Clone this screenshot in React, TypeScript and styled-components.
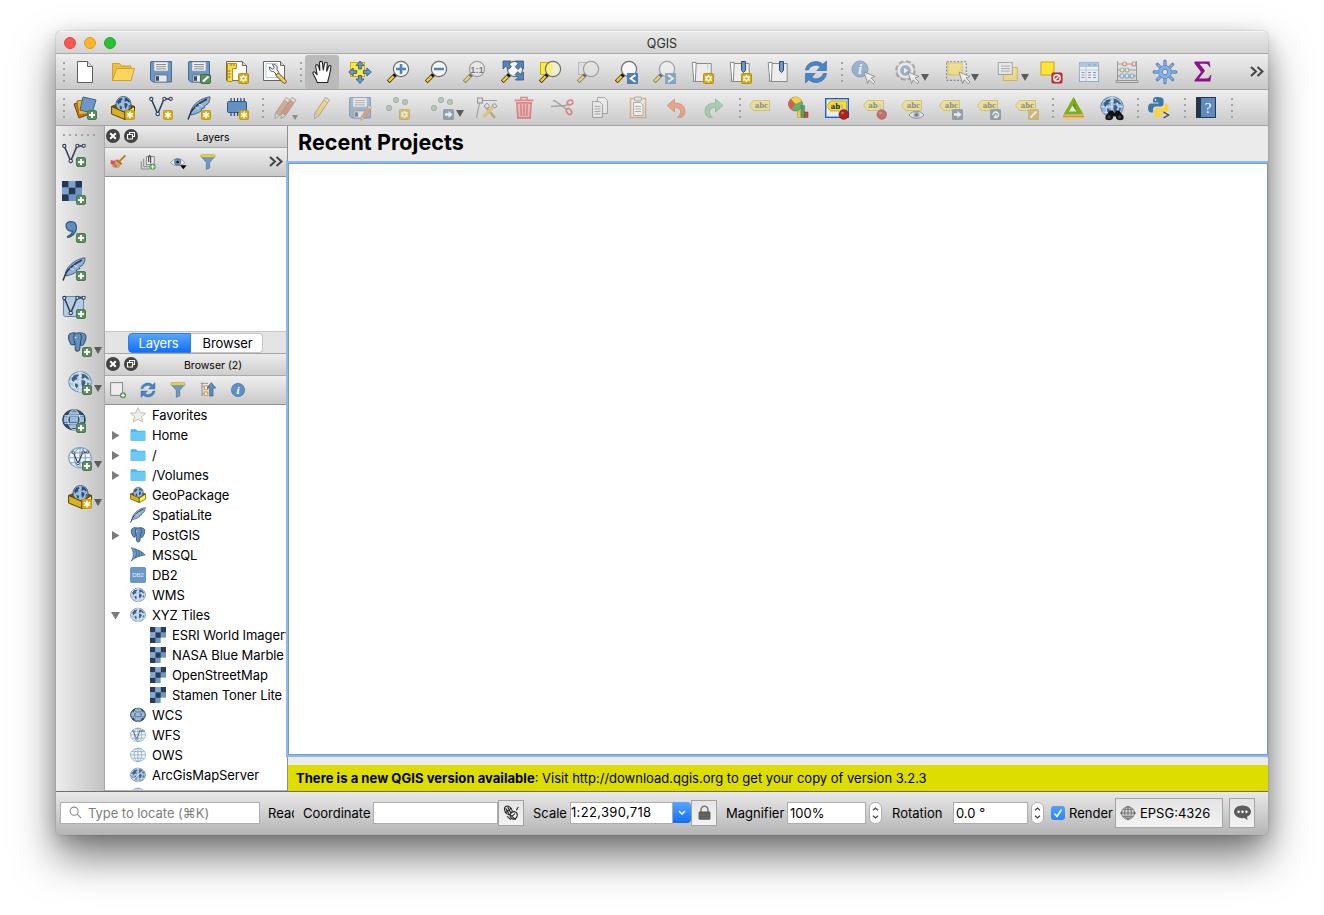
import React from "react";
import styled, { createGlobalStyle, css } from "styled-components";

const GlobalStyle = createGlobalStyle`
  * { box-sizing: border-box; }
  body { margin: 0; background: #fff; overflow: hidden; }
  #root { font-family: Inter, "Liberation Sans", "DejaVu Sans", sans-serif; font-size: 13px; color: #000; }
`;

/* ---------- icon fragments ---------- */

const BLUE = "#6d97c4";
const NAVY = "#2b3e55";

const PlusBadge = () => (
  <g>
    <rect x="14.5" y="14.5" width="9" height="9" rx="1.5" fill="#5b8f5e" stroke="#4d7a50" />
    <path d="M19 16v6M16 19h6" stroke="#fff" strokeWidth="2" />
  </g>
);
const StarBadge = () => (
  <g>
    <rect x="14.5" y="14.5" width="9" height="9" rx="1" fill="#d3ac15" stroke="#c39d10" />
    <path d="M19 15.6v6.8M16 17.3l6 3.4M22 17.3l-6 3.4" stroke="#fff" strokeWidth="1.4" />
  </g>
);
const SunBadge = () => (
  <g>
    <rect x="13.5" y="13.5" width="10" height="10" rx="1" fill="#d3ac15" stroke="#b8930c" />
    <path d="M18.5 14.4l1.3 2.1 2.4-.3-1 2.3 1 2.3-2.4-.3-1.3 2.1-1.3-2.1-2.4.3 1-2.3-1-2.3 2.4.3z" fill="#fff" />
    <circle cx="18.5" cy="18.5" r="1.3" fill="#d3ac15" />
  </g>
);
const ArrowBadge = ({ x = 13 }: { x?: number }) => (
  <g transform={`translate(${x} 13)`}>
    <rect width="11" height="11" rx="1.5" fill="#5f7387" />
    <path d="M2 4.2h3.5V2L9.5 5.5 5.5 9V6.8H2z" fill="#fff" />
  </g>
);
const Lens = ({ fill = "#f4f6f7" }: { fill?: string }) => (
  <g>
    <path d="M9.5 14.5L2.2 21.8" stroke="#4c4016" strokeWidth="4" />
    <path d="M8 16L2.8 21.2" stroke="#f3cf3e" strokeWidth="2.4" />
    <circle cx="8.9" cy="15.2" r="1.6" fill="#111" />
    <circle cx="15" cy="9" r="7.6" fill={fill} stroke="#6b6b6b" strokeWidth="1.2" />
  </g>
);
const Pointer = () => (
  <path d="M13 12l11 4.500-4 1.500 4 4-1.800 1.800-4-4-1.500 3.700z" fill="#fff" stroke="#555" strokeWidth=".9" />
);
const Floppy = () => (
  <g>
    <path d="M2 1.500h20.500v20.500H4L1.500 20V2z" fill={BLUE} stroke="#4a6c93" />
    <rect x="5" y="2" width="14" height="9" fill="#f1f1f1" stroke="#8b9aaa" strokeWidth=".6" />
    <path d="M7 4.500h10M7 6.700h10M7 8.900h10" stroke="#888" />
    <rect x="6" y="15" width="12" height="7" fill="#e8e8e8" stroke="#556" strokeWidth=".6" />
    <rect x="7" y="16.200" width="3" height="4.600" fill="#35506f" />
  </g>
);
const Land = ({ fill = "#3f5f85" }: { fill?: string }) => (
  <path
    d="M3.500 8l3-3.500 3.500-1 .8 2-2.300 1.500 1 2-2.800 1-1 2.500-1.500-2zM13.500 3l3 .5 3 2.500 2 3.500-2.500-.5-2-2-2.200 1.500-1.600-1 .9-2zM13.500 10l3.500.8.8 1.700-1.800 4-1.500 1.800-1-4zM7 13.500l2.500 1.200.8 2.500-1.600 2-1.700-2.500zM19.500 12.500l1.500 1-.8 2.500-1.200 1z"
    fill={fill}
  />
);
const Globe = ({ fill = "#b4cbe6" }: { fill?: string }) => (
  <g transform="translate(0 1) scale(1 .9)">
    <circle cx="12" cy="12" r="11.300" fill={fill} stroke="#6485ac" strokeWidth="1" />
    <path d="M1 12h22M12 1v22M3 6h18M3 18h18" stroke="#e9f0f8" strokeWidth=".9" fill="none" />
    <ellipse cx="12" cy="12" rx="6" ry="11" stroke="#e9f0f8" strokeWidth=".8" fill="none" />
    <Land />
  </g>
);
const WireGlobe = ({ fill = "#f2f7fc", stroke = "#86a5ca" }: { fill?: string; stroke?: string }) => (
  <g fill="none" stroke={stroke} strokeWidth="1.200" transform="translate(0 1) scale(1 .9)">
    <circle cx="12" cy="12" r="11.300" fill={fill} />
    <ellipse cx="12" cy="12" rx="5.500" ry="11" />
    <path d="M12 1v22M1 12h22M3 6.500h18M3 17.500h18" />
  </g>
);
const DarkGlobe = () => (
  <g transform="translate(0 1) scale(1 .9)">
    <circle cx="12" cy="12" r="11.300" fill="#2f4c70" stroke="#253c58" />
    <path d="M8 2.800h8v3.600H8zM2 9h4v5.400H1.700zM8 9h8v5.400H8zM18 9h4v5.400h-4zM8 17h8v4H8z" fill="#9bbbe0" />
    <ellipse cx="12" cy="12" rx="6" ry="11" fill="none" stroke="#dbe6f2" strokeWidth=".9" />
    <path d="M2.500 7.600h19M2.500 15.800h19" stroke="#dbe6f2" strokeWidth="1.200" />
  </g>
);
const VectorV = () => (
  <g fill="none" stroke={NAVY} strokeWidth="1.500">
    <path d="M2.500 3.500l6.200 14.500L15 3h7" />
    <g fill="#f4f4f4" strokeWidth="1.100">
      <circle cx="2.300" cy="3" r="1.600" />
      <circle cx="8.700" cy="18" r="1.700" />
      <circle cx="15.400" cy="2.800" r="1.600" />
      <circle cx="21.700" cy="2.800" r="1.600" />
    </g>
  </g>
);
const Feather = () => (
  <g>
    <path d="M23 .8C14 2 6 8 3.500 15.500L4 19c4-1 8-2 11-5l-1-.8 4-1.600-.8-1.300 3.800-2.600C22.500 5.500 23 3 23 .8z" fill="#8fb2d8" stroke="#3b5878" strokeWidth=".9" />
    <path d="M20 3C12 7 6 12 3.500 17L1 23.500" fill="none" stroke="#26394f" strokeWidth="1.500" />
    <path d="M8 11l4 2M11.500 8l4 2" stroke="#e3edf7" strokeWidth=".8" />
  </g>
);
const Checker = () => (
  <g>
    <rect x="0" y="0" width="20" height="20" fill="#6d94c2" />
    <path d="M0 0h6.600v6.600H0zM13.300 0H20v6.600h-6.700zM6.600 6.600h6.700v6.700H6.600zM0 13.300h6.600V20H0z" fill="#243951" />
    <path d="M6.600 0h6.700v6.600H6.600zM0 6.600h6.600v6.700H0z" fill="#7ea2ce" />
  </g>
);
const Elephant = () => (
  <g>
    <path d="M2 4c1-3 6-3.500 9-2.500C15 .5 21 1 22 4c.8 3-1 8-3 11-1 1.200-2.500.6-3.500 0L15 20c-.3 3.200-5 3.500-5.300 0L9.500 14c-2 1-3.500 2-4.700.5C3 12 1.500 7 2 4z" fill="#6490bd" stroke="#35526f" strokeWidth="1.300" />
    <path d="M9.200 2.200C7.500 4 7.500 9 9.500 13.500M15.500 2.200c2.200 2.500 1.800 6 .3 9.300l.2 3" fill="none" stroke="#2c4764" strokeWidth="1.200" />
    <circle cx="10" cy="6.500" r=".8" fill="#fff" />
  </g>
);
const GeoPackage = () => (
  <g>
    <path d="M.6 10.500L12 5.500l11.500 5-9.500 6z" fill="#6b560f" stroke="#54430a" strokeLinejoin="round" />
    <circle cx="12.500" cy="8" r="7.500" fill="#9dbbdd" stroke="#47688e" />
    <g transform="translate(3.500 -.5) scale(.74)"><Land fill="#2f4a6c" /></g>
    <path d="M.6 10.500L14 16.500v7L.6 18z" fill="#d9b21c" stroke="#54430a" strokeLinejoin="round" />
    <path d="M14 16.500l9.500-6V18L14 23.500z" fill="#fdf03e" stroke="#54430a" strokeLinejoin="round" />
  </g>
);
const TagShape = ({ text, x = 12.500, fill = "#f3e063", ink = "#4c4a3c" }: { text: string; x?: number; fill?: string; ink?: string }) => (
  <g>
    <path d="M.5 9.500L4.500 4.500h16v10h-16z" fill={fill} stroke="#c3ab2e" />
    <text x={x} y="12.300" textAnchor="middle" fontFamily="DejaVu Serif Condensed, DejaVu Serif" fontWeight="700" fontSize="7.800" fill={ink}>{text}</text>
  </g>
);
const Tag = () => <TagShape text="abc" />;
const Pin = () => (
  <g>
    <path d="M16.500 8l2 9" stroke="#bbb" strokeWidth="2" />
    <circle cx="18.800" cy="18.500" r="4.800" fill="#b3201f" stroke="#7c1010" strokeWidth=".7" />
    <circle cx="17.500" cy="17" r="1.300" fill="#dd6a66" />
  </g>
);
const Refresh = () => (
  <g fill="#4b84c6" stroke="#2f66a5" strokeWidth=".6">
    <path d="M1.500 10C2 5 6.500 1.500 12 1.500c3 0 5 1 6.800 2.700L22.500 1v9.500h-9.700l3.400-3.400C14.500 5.200 12.500 5 11 5.300 7 5.800 5 8 4.500 10z" />
    <path d="M22.500 13.500c-.5 5-5 9-10.500 9-3 0-5.200-1-7-2.700L1.500 23v-9.500h9.700l-3.400 3.400c1.700 1.700 3.500 2.200 5.200 1.800 3.800-.7 5.500-2.700 6.300-5.200z" />
  </g>
);
const Map24 = () => (
  <g fill="#ededed" stroke="#8a8a8a" transform="translate(.7 0)">
    <path d="M4.500 3.500h16v18h-18z" />
    <path d="M1.500 2.500h4l-.8 19H3.200z" fill="#fff" />
    <path d="M17 3.500v6" stroke="#ccc" />
  </g>
);
const Bookmark = ({ x = 13.500 }: { x?: number }) => (
  <path d={`M${x} 1.500h4v9l-2 2-2-2z`} fill="#6d97c4" stroke="#2e4d72" />
);
const Points = () => (
  <g fill="#8fb39a" stroke="#698872" strokeWidth=".8">
    <circle cx="3" cy="12" r="2.700" />
    <circle cx="10" cy="4" r="2.700" />
    <circle cx="19" cy="6" r="2.700" />
  </g>
);
const PencilShape = ({ color, x = 0 }: { color: string; x?: number }) => (
  <g transform={`translate(${x} 0)`}>
    <path d="M14 1.500l4 2.500-10.500 15.500L3 22.500l.5-5.500z" fill={color} stroke="#7d6c58" strokeWidth=".9" />
    <path d="M14 1.500l4 2.500-1.800 2.600-4-2.500zM3 22.500l.5-5.500 4 2.500z" fill="#dcd5c8" stroke="#85796a" strokeWidth=".7" />
  </g>
);
const FunnelShape = () => (
  <g>
    <path d="M2 4l7.500 8.500V23l5-2v-8.500L22 4z" fill="#6f9ac6" stroke="#496c92" />
    <rect x="1.500" y="1" width="21" height="4" rx="1" fill="#e6d862" stroke="#a49a3c" />
  </g>
);

const icons: Record<string, React.ReactNode> = {
  newFile: (
    <g>
      <path d="M4.500 1.500h10l5 5v16h-15z" fill="#fff" stroke="#5e5e5e" />
      <path d="M14.500 1.500v5h5" fill="#ddd" stroke="#5e5e5e" />
    </g>
  ),
  open: (
    <g stroke="#cfa12d" strokeLinejoin="round">
      <path d="M1.500 21V3.500h7l2 2.500h9.500v3" fill="#eebf3c" />
      <path d="M1.500 20.500l4-12h18l-3.500 12z" fill="#fbd55c" />
    </g>
  ),
  save: <Floppy />,
  saveAs: (
    <g>
      <Floppy />
      <rect x="13.500" y="14.500" width="10" height="9" rx="1.500" fill="#5b8f5e" stroke="#426d46" />
      <path d="M16 21.500l5.500-5" stroke="#fff" strokeWidth="2.200" />
    </g>
  ),
  newLayout: (
    <g transform="translate(-1 0)">
      <path d="M2.500 1.500h16l4 4v15h-20z" fill="#fff" stroke="#666" />
      <path d="M18.500 1.500v4h4" fill="#ddd" stroke="#666" />
      <path d="M3.500 3.500h9v5h-4v13h-5z" fill="#f7d847" stroke="#b8930c" />
      <path d="M4 11h2.500M4 14h2.500M4 17h2.500M7 4v2M10 4v2" stroke="#94770c" />
      <g transform="translate(1 0)"><SunBadge /></g>
    </g>
  ),
  layoutManager: (
    <g transform="translate(-1 0)">
      <path d="M1.500 1.500h17l4 4v15h-21z" fill="#fff" stroke="#666" />
      <path d="M18.500 1.500v4h4" fill="#ddd" stroke="#666" />
      <path d="M4 3.500h11v14H4z" fill="none" stroke="#b8c9e2" />
      <path d="M15.500 14.500l7 7" stroke="#6b5512" strokeWidth="4.500" strokeLinecap="round" />
      <path d="M16 15l6.500 6.500" stroke="#f0d06b" strokeWidth="2.800" strokeLinecap="round" />
      <path d="M10.500 4.500c3-.5 5.500 2 4.500 5l2 3-2.500 2-3-3c-3 .5-4.500-2-4-4.500l3 2 1.800-1.500z" fill="#eee" stroke="#555" />
    </g>
  ),
  hand: (
    <path
      transform="translate(.7 0)"
      d="M6.500 22.500c-.3-2-2.300-5-4-8.500-1-2 .8-3 2-1.600l2 2.600L5 6.500c-.3-2 2-2.600 2.600-.7l1.600 5L8.800 3c0-2.200 2.800-2.200 3 0l.7 7.300L13.800 3.500c.5-2 3-1.500 2.800.4l-.7 7.600 2-5c.7-1.700 2.700-1 2.300.8-.7 4-1 6.500-2 10-.4 1.500-1 2.500-1.200 5.200z"
      fill="#fff"
      stroke="#222"
      strokeWidth="1.100"
    />
  ),
  panSelection: (
    <g>
      <rect x="2.500" y="2.500" width="14" height="14" fill="#fdea3b" stroke="#cdab16" />
      <path d="M12 1l4 4.500h-2.500V9h-3V5.500H8zM12 23.500l4-4.500h-2.500v-3.500h-3V19H8zM.7 12l4.500-4v2.500h3.500v3H5.200V16zM23.300 12l-4.500-4v2.500h-3.500v3h3.500V16z" fill="#6796c8" stroke="#31547d" strokeWidth=".8" />
    </g>
  ),
  zoomIn: <g><Lens /><path d="M15 4v10M10 9h10" stroke="#4d83bb" strokeWidth="2.600" /></g>,
  zoomOut: <g><Lens /><path d="M10 9h10" stroke="#4d83bb" strokeWidth="2.600" /></g>,
  zoomNative: (
    <g><Lens fill="#eee" /><text x="15" y="12.500" textAnchor="middle" fontFamily="Liberation Sans" fontWeight="700" fontSize="9.500" fill="#333">1:1</text></g>
  ),
  zoomFull: (
    <g>
      <Lens />
      <path d="M3 1h8L8.500 3.500l3 3-2.800 2.800-3-3L3 9zM23.500 1v8L21 6.500l-3 3-2.800-2.800 3-3L15.500 1zM23.500 20h-8l2.500-2.500-3-3 2.800-2.800 3 3 2.700-2.700z" fill="#5585b8" stroke="#2f5480" strokeWidth=".8" />
    </g>
  ),
  zoomSelection: (
    <g>
      <rect x="2.500" y="2.500" width="12" height="12" fill="#fdea3b" stroke="#cdab16" />
      <Lens fill="#f1efd2" />
      <path d="M9.500 5q2-3 5-3v14q-3 0-5-3z" fill="#f8ec84" />
    </g>
  ),
  zoomLayer: (
    <g><rect x="2.500" y="2.500" width="12" height="12" fill="#ddd" stroke="#999" /><Lens fill="#e4e4e4" /></g>
  ),
  zoomLast: (
    <g><Lens /><rect x="13" y="13" width="11" height="11" fill="#4d7fb3" /><path d="M21.500 15l-5 3.500 5 3.500" fill="none" stroke="#fff" strokeWidth="1.800" /></g>
  ),
  zoomNext: (
    <g><Lens /><rect x="13" y="13" width="11" height="11" fill="#4d7fb3" /><path d="M16 15l5 3.500-5 3.500" fill="none" stroke="#fff" strokeWidth="1.800" /></g>
  ),
  newMap: <g><Map24 /><SunBadge /></g>,
  newBookmark: <g><Map24 /><Bookmark /><SunBadge /></g>,
  bookmarks: <g><Map24 /><Bookmark /></g>,
  refresh: <Refresh />,
  identify: (
    <g><circle cx="9" cy="9" r="8" fill="#5f8fc4" stroke="#49729f" /><text x="9" y="14" textAnchor="middle" fontFamily="Liberation Serif" fontStyle="italic" fontWeight="700" fontSize="15" fill="#fff">i</text><Pointer /></g>
  ),
  action: (
    <g transform="translate(-1 0)">
      <circle cx="10.500" cy="10.500" r="9" fill="none" stroke="#777" strokeWidth="2.600" strokeDasharray="4.700 2.370" />
      <circle cx="10.500" cy="10.500" r="8.400" fill="#f0f0f0" stroke="#888" strokeWidth=".8" />
      <circle cx="10.500" cy="10.500" r="5" fill="#5f8fc4" stroke="#777" strokeWidth=".6" />
      <path d="M9 7.800l4.200 2.700L9 13.200z" fill="#fff" />
      <Pointer />
    </g>
  ),
  select: (
    <g>
      <rect x=".7" y="1.700" width="19.600" height="18.600" fill="none" stroke="#333" strokeDasharray="2 1.500" />
      <rect x="2" y="3" width="14" height="12" fill="#f6dd4b" stroke="#cdab16" />
      <Pointer />
    </g>
  ),
  selectValue: (
    <g>
      <path d="M6.500 7.500h14v13h-14z" fill="#f6dd4b" stroke="#b99b16" transform="translate(.8 0)" />
      <rect x="2.300" y="2.500" width="14" height="12" fill="#eee" stroke="#777" />
      <path d="M5 6h9M5 8.500h9M5 11h9" stroke="#888" />
    </g>
  ),
  deselect: (
    <g transform="translate(1 .5)">
      <rect x="1" y="1.500" width="13" height="13" fill="#fde53a" stroke="#cda316" />
      <rect x="12" y="12.500" width="10" height="10" rx="1" fill="#d3353a" stroke="#a81d22" />
      <circle cx="17" cy="17.500" r="3.200" fill="none" stroke="#fff" strokeWidth="1.400" />
      <path d="M14.800 19.700l4.400-4.400" stroke="#fff" strokeWidth="1.300" />
    </g>
  ),
  table: (
    <g>
      <rect x="2.500" y="2.500" width="19" height="19" fill="#fff" stroke="#6691c2" />
      <path d="M3 3h18v4H3z" fill="#8cb0da" />
      <path d="M9 3v18M3 10h18" stroke="#9cbbe0" />
      <path d="M4.500 12.500h3M11 12.500h3M16 12.500h3M4.500 15h3M11 15h3M16 15h3M4.500 17.500h3M11 17.500h3M16 17.500h3M11 5h3M16 5h3" stroke="#456c98" />
    </g>
  ),
  abacus: (
    <g fill="none" stroke="#666">
      <path d="M2.500 1v20M21.500 1v20" />
      <path d="M2 4h20M2 10h20M2 16h20" />
      <path d="M1 20.500h22v2H1z" fill="#ddd" />
      <g fill="#eee" strokeWidth="1.200"><g stroke="#c84040"><circle cx="9.500" cy="4" r="2" /><circle cx="19" cy="4" r="2" /></g><g stroke="#5a9a5c"><circle cx="7" cy="10" r="2" /><circle cx="12" cy="10" r="2" /></g><g stroke="#4b7fbc"><circle cx="7" cy="16" r="2" /><circle cx="12" cy="16" r="2" /><circle cx="17" cy="16" r="2" /></g></g>
    </g>
  ),
  toolbox: (
    <g>
      <path
        d="M12 1.200v21.600M1.200 12h21.600M4.400 4.400l15.200 15.200M19.600 4.400L4.400 19.600"
        stroke="#5f8dc2"
        strokeWidth="3.400"
        strokeLinecap="round"
      />
      <path d="M12 2v20M2 12h20M5 5l14 14M19 5L5 19" stroke="#86aee0" strokeWidth="1.600" strokeLinecap="round" />
      <circle cx="12" cy="12" r="6.500" fill="#86aee0" stroke="#5f8dc2" strokeWidth=".8" />
      <circle cx="12" cy="12" r="2.700" fill="#dfdfdf" stroke="#5f8dc2" />
    </g>
  ),
  sigma: <path d="M3.500 1.500h15l.8 5.500h-1c-.8-2.500-1.800-3.300-4.300-3.300H8.500l5.500 7-6 7.800h7c2.500 0 3.500-1 4.300-3.500h1l-1 6.500H3.500v-1.300L10 12 3.500 3.500z" fill="#8c128c" />,
  dataSource: (
    <g>
      <path d="M1 8l11-4 5 14-11 4z" fill="#c7702e" stroke="#7a4319" />
      <path d="M4 5l12-2 2 14-12 2z" fill="#efb722" stroke="#96710f" />
      <path d="M10 1l13 3-4 13-12-3z" fill="#6d97c8" stroke="#3e6087" />
      <PlusBadge />
    </g>
  ),
  newGpkg: <g><GeoPackage /><StarBadge /></g>,
  newShape: <g><VectorV /><StarBadge /></g>,
  newSpatialite: <g><Feather /><StarBadge /></g>,
  newMemory: (
    <g>
      <path d="M6 2v18M9.300 2v18M12.600 2v18M15.900 2v18M19.200 2v18" stroke="#2a4364" strokeWidth="1.200" />
      <rect x="2.500" y="5.500" width="19" height="11" rx="1" fill="#6290c4" stroke="#34567f" />
      <StarBadge />
    </g>
  ),
  edits: (
    <g><g transform="translate(-2 0)"><PencilShape color="#c98759" /></g><PencilShape color="#d1603f" x={4} /></g>
  ),
  pencil: <PencilShape color="#ecd43e" x={1.5} />,
  saveEdits: <g><Floppy /><g transform="translate(11 8.500) scale(.7)"><PencilShape color="#e8722f" /></g></g>,
  addPoint: <g><Points /><SunBadge /></g>,
  moveFeature: <g><Points /><ArrowBadge x={12} /></g>,
  vertexTool: (
    <g>
      <path d="M6 4.500h17M6 4.500L2.500 22" stroke="#666" fill="none" />
      <rect x="3.500" y="2" width="5" height="5" fill="#ddd" stroke="#555" />
      <path d="M11 10l10 12" stroke="#a5842d" strokeWidth="2.500" />
      <path d="M20 10L9.500 21" stroke="#e0b638" strokeWidth="3" />
      <path d="M10 10l3-3 3 3.500-3 2zM18 9l3-1.500 2 3-2.500 1.500z" stroke="#666" fill="#ddd" />
    </g>
  ),
  trash: (
    <g fill="none" stroke="#dc3d42" transform="translate(1.200 0) scale(.9 .97)">
      <path d="M1.500 4.500h21M8.500 4V1.500h7V4" strokeWidth="1.600" />
      <path d="M4 7h16l-1.200 15.500H5.200z" fill="#e8a1a1" strokeWidth="1.800" />
      <path d="M8.500 8.500l.5 12M12 8.500v12M15.500 8.500l-.5 12" strokeWidth="1.800" />
    </g>
  ),
  cut: (
    <g fill="none">
      <path d="M3 4.500l2 .5 12 8.500M1 10.500l15-1 3-2" stroke="#777" strokeWidth="1.500" />
      <ellipse cx="20" cy="6.500" rx="3" ry="2.300" stroke="#d04444" strokeWidth="1.600" transform="rotate(-25 20 6.500)" />
      <ellipse cx="19" cy="15.500" rx="2.300" ry="3.300" stroke="#d04444" strokeWidth="1.600" transform="rotate(-35 19 15.500)" />
    </g>
  ),
  copy: (
    <g fill="#f0f0f0" stroke="#777"><path d="M9.500 1.500h7l3 3v13h-10z" /><path d="M4.500 5.500h7l3 3v13h-10z" /><path d="M6.500 10.500h6M6.500 13h6M6.500 15.500h6M6.500 18h6" strokeWidth=".9" /></g>
  ),
  paste: (
    <g><rect x="4.500" y="2.500" width="15" height="19" fill="#eee" stroke="#cc8b45" strokeWidth="1.500" /><path d="M7.500 6.500h7l2.500 2.500v10.500H7.500z" fill="#fff" stroke="#888" /><rect x="8.500" y="1" width="7" height="4" rx="1" fill="#ddd" stroke="#777" /><path d="M9 10.500h6M9 13h6M9 15.500h6" stroke="#888" /></g>
  ),
  undo: <path d="M3 9.500l7.500-6.500v4c7 0 10.500 3 10.500 8.500 0 3-1.500 4.800-3.500 5.800h-4c3.500-2 4.500-7.500.5-9.300-1-.4-3.500-.5-3.500-.5v4.500z" fill="#ea7a4c" stroke="#c75a2d" strokeWidth=".8" />,
  redo: <path d="M21 9.500L13.500 3v4C6.500 7 3 10 3 15.500c0 3 1.500 4.800 3.500 5.800h4c-3.500-2-4.500-7.500-.5-9.300 1-.4 3.500-.5 3.500-.5v4.500z" fill="#7cc08e" stroke="#53986a" strokeWidth=".8" />,
  tag: <Tag />,
  diagram: (
    <g>
      <circle cx="8.500" cy="8" r="7" fill="#69b06d" stroke="#5d6b50" strokeWidth=".6" />
      <path d="M8.500 8L4 2.500A7 7 0 0 1 14.800 5z" fill="#f5cf3f" /><path d="M8.500 8L3 3.600A7 7 0 0 0 4 13.400z" fill="#dc5b56" />
      <rect x="10.500" y="15" width="3.500" height="6.500" fill="#f3cc46" stroke="#b4952c" strokeWidth=".5" /><rect x="14" y="9.500" width="3.500" height="12" fill="#59a05d" stroke="#447348" strokeWidth=".5" /><rect x="17.500" y="16" width="3.500" height="5.500" fill="#b5553f" stroke="#7c372a" strokeWidth=".5" />
    </g>
  ),
  highlightLabels: (
    <g>
      <rect x=".7" y="2.700" width="22.600" height="18.600" fill="#e8eef6" stroke="#1d62c4" strokeWidth="1.400" />
      <g transform="translate(1 .5)"><TagShape text="ab" x={9.5} fill="#f8de2a" ink="#222" /></g><Pin />
    </g>
  ),
  pinLabel: <g><TagShape text="ab" x={10} /><Pin /></g>,
  showLabel: (
    <g><Tag /><path d="M8 19c4-5 11-5 15 0-4 4.500-11 4.500-15 0z" fill="#eee" stroke="#555" /><circle cx="15.500" cy="18.800" r="3" fill="#5f8fc4" /><circle cx="15.500" cy="18.800" r="1.300" fill="#222" /></g>
  ),
  moveLabel: <g><Tag /><ArrowBadge /></g>,
  rotateLabel: <g><Tag /><rect x="13" y="13" width="11" height="11" rx="1.500" fill="#5f7387" /><path d="M16 19a2.800 2.800 0 1 1 2.800 2.600M18.800 18v3.600l-2-1" fill="none" stroke="#fff" strokeWidth="1.300" /></g>,
  editLabel: <g><Tag /><rect x="13" y="13" width="11" height="11" rx="1.500" fill="#c6a125" /><path d="M15.500 21.500l6-6" stroke="#fff" strokeWidth="2" /></g>,
  grass: (
    <g><path d="M11.500 1L1.500 18.500h20z" fill="#7fae1d" /><path d="M10.500 9.500l-3.500 6h7.500z" fill="#e6e9dc" /><path d="M11.500 1l2.500 4.500-3.500 4 4.500 6" fill="#6a9814" /><path d="M1 20.300h21" stroke="#e8862c" strokeWidth="1.800" /><path d="M1 22.200h21" stroke="#f4c83c" strokeWidth="1.300" /></g>
  ),
  metaSearch: (
    <g><g transform="translate(0 -1)"><Globe fill="#94b4dc" /></g><path d="M7.500 13.500h3l1 2h1l1-2h3l4.500 5.500v3c-1 1.500-6 1.500-7 0l-1-3h-2l-1 3c-1 1.500-6 1.500-7 0v-3z" fill="#111" transform="translate(2.500 1)" /><circle cx="9" cy="21" r="1.800" fill="#444" /><circle cx="19.500" cy="21" r="1.800" fill="#444" /></g>
  ),
  python: (
    <g>
      <path d="M10.500 1C6.500 1 6 2.500 6 4v2.500h5.500v1H4C2 7.500 1 9.500 1 12s1 4.500 3 4.500h2V13.500c0-2 1.300-3 3-3h5c1.500 0 2.500-1 2.500-2.500V4c0-2-2-3-6-3z" fill="#3b77a8" /><circle cx="8.500" cy="3.800" r=".9" fill="#fff" />
      <path d="M11.500 21.500c3 0 4-1.500 4-2.500V17h-4v-1H19c1.500 0 2.500-1.500 2.500-4s-1-4.500-2.500-4.500h-1.500V9c0 2-1 3-3 3h-5C8 12 7 13 7 14.500V18c0 2 1.500 3.500 4.500 3.500z" fill="#fbd146" />
      <path d="M16.500 16l5 3-5 3" fill="none" stroke="#444" strokeWidth="1.400" />
    </g>
  ),
  help: (
    <g><rect x="2.500" y="1.500" width="19" height="20" fill="#5d8bbf" stroke="#27384d" /><path d="M2 1h5v21H2z" fill="#26364a" /><text x="14" y="16.500" textAnchor="middle" fontFamily="Liberation Serif" fontSize="15" fill="#fff">?</text></g>
  ),
  addVector: <g><VectorV /><PlusBadge /></g>,
  addRaster: <g><Checker /><PlusBadge /></g>,
  addComma: <g><path d="M4 6.500C4 1.500 14 .8 14.500 8c.3 5-4 9.500-8.500 10.500l-.5-1c3-1.500 5-3.500 5-5.500C7 12.500 4 10.500 4 6.500z" fill="#5e8cbd" stroke="#31557d" strokeWidth="1.200" /><PlusBadge /></g>,
  addSpatialite: <g><Feather /><PlusBadge /></g>,
  addVirtual: <g><rect x="1.500" y="1.500" width="20" height="20" rx="2" fill="#b5cbe5" stroke="#6784a6" /><VectorV /><PlusBadge /></g>,
  addPostgis: <g><g transform="translate(-1 -1) scale(.85)"><Elephant /></g><PlusBadge /></g>,
  addWms: <g><g transform="translate(0 -1)"><Globe /></g><PlusBadge /></g>,
  addWcs: <g><g transform="translate(0 -1)"><DarkGlobe /></g><PlusBadge /></g>,
  addWfs: <g><g transform="translate(0 -1)"><WireGlobe /></g><g transform="translate(3.500 3) scale(.75)"><VectorV /></g><PlusBadge /></g>,
  globe: <Globe />,
  darkGlobe: <DarkGlobe />,
  wfs: <g><WireGlobe /><g transform="translate(3 3.500) scale(.8)" opacity=".8"><VectorV /></g></g>,
  wireGlobe: <WireGlobe />,
  arcgis: <g><Globe fill="#86a8d0" /><path d="M4 20L20 5" stroke="#dbe6f2" strokeWidth="1.500" /></g>,
  geoPackage: <GeoPackage />,
  feather: <Feather />,
  elephant: <Elephant />,
  mssql: <g><path d="M2 1c5 1.500 15 4 21 11-7 1-15 3-21 9C6 14 6 8 2 1z" fill="#6f98c6" stroke="#35587f" /><path d="M8 3.500c3 5 2 8 0 13M13 5.500c2 4 1 6 0 8.500M17.500 8c1 2 0 3 0 5" fill="none" stroke="#35587f" strokeWidth="1.200" /></g>,
  db2: <g><rect width="24" height="24" rx="2.500" fill="#6a97c7" /><text x="12" y="15" textAnchor="middle" fontFamily="Liberation Sans" fontSize="9" fill="#e8f0f9">DB2</text></g>,
  checker: (
    <g>
      <rect width="24" height="24" fill="#6d94c2" />
      <path d="M0 0h8v8H0zM16 0h8v8h-8zM8 8h8v8H8zM0 16h8v8H0z" fill="#2b3d52" />
      <path d="M8 0h8v8H8zM0 8h8v8H0z" fill="#86a9d3" />
      <path d="M16 16h8v8h-8z" fill="#fff" />
    </g>
  ),
  folder: <g><path d="M1 3.500h8l2 2h12v15H1z" fill="#4fb2ea" /><path d="M1 7h22v13.500H1z" fill="#6cc8f7" /></g>,
  star: <path d="M12 1l3.300 7.500 8.200.8-6.200 5.400 1.900 8L12 18.500 4.800 22.700l1.900-8L.5 9.300l8.200-.8z" fill="#eeeee6" stroke="#a3a396" />,
  brush: (
    <g transform="translate(0 1)"><path d="M23 1L14 10" stroke="#b5822a" strokeWidth="3" /><path d="M10 7l8 6.500-5 6C9 21 5 19.500 2 17l2-7z" fill="#e79a52" /><path d="M1 8l7 2-1 5-6-1z" fill="#e84d55" /><path d="M6 14.500l5 1-1 4-5-2z" fill="#5f93d6" /><path d="M10 8l7.500 6" stroke="#a35a16" strokeWidth="2" /></g>
  ),
  addGroup: (
    <g fill="none" stroke="#808080" strokeWidth="1.300"><path d="M2 11v11.500h13M5.500 7v12h12" /><rect x="9.500" y="4" width="12" height="12" fill="#e8e8e8" /><path d="M13 12V4.500q0-2.500 1.500-2.500T16 4.500V14" stroke="#333" strokeWidth="1.500" /><circle cx="19" cy="19" r="4.600" fill="#5b9a5e" stroke="none" /><path d="M19 16v6M16 19h6" stroke="#fff" strokeWidth="1.600" /></g>
  ),
  eye: (
    <g transform="translate(1 0)"><path d="M0 13c5-8 16-8 21 0-5 6-16 6-21 0z" fill="#f1f1f1" stroke="#888" strokeWidth="1.200" /><circle cx="10.500" cy="12" r="4.800" fill="#6d95c2" stroke="#3e5f86" /><circle cx="10.500" cy="12" r="2" fill="#111" /><path d="M14 17h10l-5 6z" fill="#000" /></g>
  ),
  funnel: <FunnelShape />,
  addLayer: <g><rect x="1" y="1" width="18" height="19" fill="#ededed" stroke="#777" strokeWidth="1.300" /><circle cx="19.500" cy="20" r="4.600" fill="#5b8f5e" /><path d="M19.500 17.200v5.600M16.700 20h5.600" stroke="#fff" strokeWidth="1.700" /></g>,
  collapse: (
    <g fill="none"><path d="M3 1v20M3 7h4M3 18h4" stroke="#888" strokeWidth="1.300" /><path d="M1 2h11" stroke="#888" strokeWidth="1.300" /><rect x="6.500" y="6" width="5" height="5" stroke="#e08c2a" strokeWidth="1.400" fill="#fff" /><rect x="6.500" y="15" width="5" height="5" stroke="#e08c2a" strokeWidth="1.400" fill="#fff" /><path d="M17 1l6.500 8h-4v12h-5V9h-4z" fill="#5f8fc4" stroke="#2f5480" /></g>
  ),
  info: <g><circle cx="12" cy="12" r="10" fill="#5f8fc4" stroke="#49729f" /><text x="12" y="18" textAnchor="middle" fontFamily="Liberation Serif" fontStyle="italic" fontWeight="700" fontSize="17" fill="#fff">i</text></g>,
  search: <g fill="none" stroke="#8a8a8a" strokeWidth="2"><circle cx="9.500" cy="9.500" r="7.500" /><path d="M15 15l7.500 7.500" /></g>,
  mouse: (
    <g stroke="#222" fill="#f4f4f4" strokeWidth="1.700"><ellipse cx="8" cy="8" rx="5" ry="7" transform="rotate(-35 8 8)" /><path d="M7 3l5 9M4 5l5 8M3 12l9-7" fill="none" /><path d="M11 13c5-6 12-2 10 4s-9 5-10 0zM20 8l3-5" /><path d="M6 17l6 5M10 14l9 8M13 17l5-4" fill="none" /></g>
  ),
  lock: <g><path d="M6.500 11V7.500a5.500 5.500 0 0 1 11 0V11" fill="none" stroke="#777" strokeWidth="2.400" /><rect x="2.500" y="10.500" width="19" height="13" rx="2" fill="#5b5b5b" /><path d="M3 14h18M3 17h18M3 20h18" stroke="#6e6e6e" /></g>,
  crs: <g fill="none" stroke="#707070" strokeWidth="1.300"><circle cx="12" cy="12" r="9.500" fill="#ccc" /><path d="M12 1v22M1 12h22M4 6.500h16M4 17.500h16" /><ellipse cx="12" cy="12" rx="5" ry="9.500" /><path d="M0 12l3-3v6zM24 12l-3-3v6z" fill="#666" stroke="none" /></g>,
  message: <g><path d="M12 2C5 2 0 6 0 11s5 9 12 9c1 0 2 0 3-.2L19 23l-.5-5C22 16.500 24 14 24 11c0-5-5-9-12-9z" fill="#5c5c5c" /><circle cx="6.500" cy="11" r="1.700" fill="#fff" /><circle cx="12" cy="11" r="1.700" fill="#fff" /><circle cx="17.500" cy="11" r="1.700" fill="#fff" /></g>,
};

const Svg = styled.svg<{ $dim?: boolean }>`
  display: block;
  flex: none;
  overflow: visible;
  opacity: ${(p) => (p.$dim ? 0.55 : 1)};
`;
const Icon = ({ name, size = 24, dim }: { name: string; size?: number; dim?: boolean }) => (
  <Svg width={size} height={size} viewBox="0 0 24 24" $dim={dim} aria-hidden>
    {icons[name]}
  </Svg>
);

/* ---------- window ---------- */

const Desktop = styled.div`
  width: 1324px;
  height: 915px;
  padding: 31px 56px 0;
  background: #fff;
`;
const Window = styled.div`
  width: 1212px;
  height: 804px;
  border-radius: 5px;
  overflow: hidden;
  display: flex;
  flex-direction: column;
  background: #ebebeb;
  box-shadow: 0 0 1px rgba(0, 0, 0, 0.6), 0 22px 42px rgba(0, 0, 0, 0.52), 0 4px 18px rgba(0, 0, 0, 0.16);
`;
const TitleBar = styled.header`
  height: 23px;
  flex: none;
  display: grid;
  grid-template-columns: 1fr auto 1fr;
  align-items: center;
  padding: 1px 8px 0;
  background: linear-gradient(#e9e9e9, #d2d2d2);
  border-top: 1px solid #f6f6f6;
  border-bottom: 1px solid #a9a9a9;
  font-size: 12.5px;
  color: #2e2e2e;
`;
const Lights = styled.div`
  display: flex;
  gap: 8px;
`;
const Light = styled.span<{ $color: string; $edge: string }>`
  width: 12px;
  height: 12px;
  border-radius: 50%;
  background: ${(p) => p.$color};
  border: 1px solid ${(p) => p.$edge};
`;

const ToolBar = styled.div`
  height: 36px;
  flex: none;
  display: flex;
  align-items: center;
  padding: 1px 0 0 1px;
  background: linear-gradient(#eeeeee, #c9c9c9);
  border-bottom: 1px solid #a3a3a3;
`;
const Handle = styled.span`
  width: 9px;
  flex: none;
  height: 20px;
  padding-left: 6px;
  display: flex;
  flex-direction: column;
  justify-content: space-between;
`;
const Dot = styled.i`
  width: 2px;
  height: 2px;
  background: #a4a4a4;
`;
const Tool = styled.button<{ $active?: boolean; $menu?: boolean }>`
  height: 34px;
  width: ${(p) => (p.$menu ? 50 : 38)}px;
  flex: none;
  border: 0;
  padding: 0;
  background: none;
  display: flex;
  align-items: center;
  justify-content: center;
  ${(p) => p.$menu && css`justify-content: flex-start; padding-left: 14px;`}
  ${(p) => p.$active && css`background: #bababa; width: 34px; margin: 0 2px; border-radius: 3px;`}
`;
const Caret = styled.span<{ $small?: boolean }>`
  flex: none;
  border: 4px solid transparent;
  border-top: 7px solid #5c5c5c;
  border-bottom: 0;
  margin: 10px 0 0 1px;
  ${(p) => p.$small && css`border-width: 5px 3.5px 0; border-top-color: #8c8c8c; margin: 18px -3px 0 -6px;`}
`;
const Chevrons = styled.span<{ $dock?: boolean }>`
  margin-left: auto;
  margin-right: 4px;
  margin-bottom: ${(p) => (p.$dock ? 2 : 1)}px;
  display: flex;
`;
const More = () => (
  <svg width="14" height="11" viewBox="0 0 14 11" fill="none" stroke="#454545" strokeWidth="2" aria-hidden>
    <path d="M1 1l5 4.500L1 10M7.500 1l5 4.500-5 4.500" />
  </svg>
);

const Body = styled.div`
  flex: 1;
  min-height: 0;
  display: flex;
`;
const SideBar = styled.aside`
  width: 48px;
  flex: none;
  display: flex;
  flex-direction: column;
  background: linear-gradient(90deg, #ededed, #c2c2c2);
`;
const SideGrip = styled.span`
  display: flex;
  justify-content: space-between;
  width: 32px;
  height: 10px;
  padding-top: 8px;
  margin-left: 7px;
`;
const SideTool = styled.button<{ $menu?: boolean }>`
  height: 38px;
  border: 0;
  background: none;
  display: flex;
  align-items: center;
  padding: 0 0 0 ${(p) => (p.$menu ? 12 : 6)}px;
  & > span { margin: 11px 0 0 2px; }
`;

const Dock = styled.section`
  width: 184px;
  flex: none;
  display: flex;
  flex-direction: column;
  border-left: 1px solid #a8a8a8;
  border-right: 1px solid #8f8f8f;
  overflow: hidden;
`;
const DockTitle = styled.div`
  height: 22px;
  flex: none;
  display: flex;
  align-items: center;
  gap: 4px;
  padding: 0 0 1px 1px;
  background: linear-gradient(#ececec, #cdcdcd);
  border-bottom: 1px solid #ababab;
  font-size: 10.5px;
`;
const DockName = styled.span`
  flex: 1;
  padding: 2px 3px 0 0;
  text-align: center;
`;
const DockTools = styled.div`
  height: 29px;
  flex: none;
  display: flex;
  align-items: center;
  background: linear-gradient(#efefef, #c8c8c8);
  border-bottom: 1px solid #909090;
`;
const SmallTool = styled.span`
  width: 30px;
  height: 28px;
  display: flex;
  align-items: center;
  justify-content: center;
  &:first-child { margin-left: -2px; }
`;
const LayerTree = styled.div`
  height: 154px;
  flex: none;
  background: #fff;
`;
const TabBar = styled.div`
  height: 23px;
  flex: none;
  display: flex;
  padding: 1px 0 0 23px;
  background: #e4e4e4;
  border-top: 1px solid #c6c6c6;
  border-bottom: 1px solid #a5a5a5;
`;
const Tab = styled.button<{ $on?: boolean }>`
  width: ${(p) => (p.$on ? 63 : 72)}px;
  height: 20px;
  padding: ${(p) => (p.$on ? "0 2px 1px 0" : "0 0 1px 2px")};
  font: 13px Inter, sans-serif;
  letter-spacing: -0.1px;
  border: 1px solid ${(p) => (p.$on ? "#2f7fe8" : "#c4c4c4")};
  border-left-width: ${(p) => (p.$on ? 1 : 0)}px;
  border-radius: ${(p) => (p.$on ? "4px 0 0 4px" : "0 4px 4px 0")};
  color: ${(p) => (p.$on ? "#fff" : "#000")};
  background: ${(p) => (p.$on ? "linear-gradient(#57a5fb, #116ffb)" : "#fff")};
`;
const Tree = styled.ul`
  flex: 1;
  min-height: 0;
  margin: 0;
  padding: 0;
  list-style: none;
  background: #fff;
  overflow: hidden;
  border-bottom: 1px solid #b4b4b4;
`;
const Row = styled.li<{ $depth: number }>`
  height: 20px;
  display: flex;
  align-items: center;
  padding-left: ${(p) => 6 + p.$depth * 20}px;
  white-space: nowrap;
`;
const Twist = styled.span`
  width: 19px;
  flex: none;
  display: flex;
`;
const RowText = styled.span`
  margin-left: 6px;
  letter-spacing: -0.08px;
`;

const Main = styled.main`
  flex: 1;
  min-width: 0;
  display: flex;
  flex-direction: column;
`;
const Heading = styled.h1`
  height: 37px;
  flex: none;
  margin: 0;
  padding-left: 10px;
  font-size: 21.5px;
  line-height: 33px;
  font-weight: 700;
  letter-spacing: 0.07px;
`;
const ProjectList = styled.div`
  position: relative;
  height: 592px;
  flex: none;
  background: #fff;
  border: 1px solid #6f9cd8;
  box-shadow: 0 0 0 2px #8fb8f0;
`;
const Notice = styled.div`
  margin-top: 10px;
  height: 26px;
  line-height: 27px;
  padding-left: 8px;
  background: #dddd00;
  font-size: 13px;
  white-space: nowrap;
  b { letter-spacing: 0.05px; }
`;

const StatusBar = styled.footer`
  height: 44px;
  flex: none;
  display: flex;
  align-items: center;
  padding: 0 0 2px 4px;
  background: linear-gradient(#e9e9e9, #b4b4b4);
  border-top: 1px solid #6e6e6e;
  white-space: nowrap;
`;
const Locator = styled.div`
  width: 200px;
  height: 22px;
  display: flex;
  align-items: center;
  gap: 6px;
  padding-left: 8px;
  background: #fff;
  border: 1px solid #adadad;
  color: #7d7d7d;
  letter-spacing: -0.05px;
`;
const Label = styled.span<{ $gap: number; $w: number }>`
  margin-left: ${(p) => p.$gap}px;
  width: ${(p) => p.$w}px;
  flex: none;
  overflow: hidden;
`;
const Field = styled.div<{ $w: number; $wide?: boolean }>`
  width: ${(p) => p.$w}px;
  height: 22px;
  flex: none;
  line-height: 20px;
  padding-left: 2px;
  background: #fff;
  border: 1px solid #adadad;
  ${(p) => p.$wide && css`padding-left: 0; letter-spacing: 0.33px; line-height: 19px;`}
`;
const ComboArrow = styled.span`
  width: 18px;
  height: 21px;
  flex: none;
  display: flex;
  align-items: center;
  justify-content: center;
  border-radius: 0 4px 4px 0;
  background: linear-gradient(#57a5fb, #0f6efb);
`;
const PushButton = styled.button<{ $w: number; $h: number; $gap?: number; $text?: boolean }>`
  width: ${(p) => p.$w}px;
  height: ${(p) => p.$h}px;
  margin-left: ${(p) => p.$gap ?? 0}px;
  flex: none;
  padding: ${(p) => (p.$text ? "0 0 0 4px" : "0")};
  display: flex;
  align-items: center;
  justify-content: ${(p) => (p.$text ? "flex-start" : "center")};
  gap: 4px;
  border: 1px solid #a3a3a3;
  background: linear-gradient(#e5e5e5, #f3f3f3);
  font: 13px Inter, sans-serif;
`;
const Spinner = styled.span`
  width: 13px;
  height: 22px;
  margin-left: 3px;
  flex: none;
  display: flex;
  align-items: center;
  justify-content: center;
  background: #fff;
  border: 1px solid #b0b0b0;
  border-radius: 6px;
`;
const CheckBox = styled.span`
  width: 14px;
  height: 14px;
  margin-left: 7px;
  flex: none;
  border-radius: 3px;
  background: linear-gradient(#4fa0fb, #2f85f8);
  display: flex;
  align-items: center;
  justify-content: center;
`;

/* ---------- data ---------- */

type Item = { n: string; dim?: boolean; menu?: boolean; active?: boolean; small?: boolean };
const d = (n: string): Item => ({ n, dim: true });

const topGroups: Item[][] = [
  [{ n: "newFile" }, { n: "open" }, { n: "save" }, { n: "saveAs" }, { n: "newLayout" }, { n: "layoutManager" }],
  [
    { n: "hand", active: true }, { n: "panSelection" }, { n: "zoomIn" }, { n: "zoomOut" }, d("zoomNative"), { n: "zoomFull" },
    { n: "zoomSelection" }, d("zoomLayer"), { n: "zoomLast" }, d("zoomNext"), { n: "newMap" }, { n: "newBookmark" }, { n: "bookmarks" }, { n: "refresh" },
  ],
  [
    d("identify"), { n: "action", dim: true, menu: true }, { n: "select", dim: true, menu: true }, { n: "selectValue", dim: true, menu: true },
    { n: "deselect" }, d("table"), d("abacus"), { n: "toolbox" }, { n: "sigma" },
  ],
];
const editGroups: Item[][] = [
  [{ n: "dataSource" }, { n: "newGpkg" }, { n: "newShape" }, { n: "newSpatialite" }, { n: "newMemory" }],
  [
    { n: "edits", dim: true, small: true }, d("pencil"), d("saveEdits"), d("addPoint"), { n: "moveFeature", dim: true, menu: true }, d("vertexTool"),
    { n: "trash", dim: true }, d("cut"), d("copy"), d("paste"), d("undo"), d("redo"),
  ],
  [d("tag"), { n: "diagram" }, { n: "highlightLabels" }, d("pinLabel"), d("showLabel"), d("moveLabel"), d("rotateLabel"), d("editLabel")],
  [{ n: "grass" }, { n: "metaSearch" }],
  [{ n: "python" }],
  [{ n: "help" }],
  [],
];
const sideTools: { n: string; menu?: boolean }[] = [
  { n: "addVector" }, { n: "addRaster" }, { n: "addComma" }, { n: "addSpatialite" }, { n: "addVirtual" },
  { n: "addPostgis", menu: true }, { n: "addWms", menu: true }, { n: "addWcs" }, { n: "addWfs", menu: true }, { n: "newGpkg", menu: true },
];
const treeRows: { icon: string; text: string; twist?: "closed" | "open"; depth?: number }[] = [
  { icon: "star", text: "Favorites" },
  { icon: "folder", text: "Home", twist: "closed" },
  { icon: "folder", text: "/", twist: "closed" },
  { icon: "folder", text: "/Volumes", twist: "closed" },
  { icon: "geoPackage", text: "GeoPackage" },
  { icon: "feather", text: "SpatiaLite" },
  { icon: "elephant", text: "PostGIS", twist: "closed" },
  { icon: "mssql", text: "MSSQL" },
  { icon: "db2", text: "DB2" },
  { icon: "globe", text: "WMS" },
  { icon: "globe", text: "XYZ Tiles", twist: "open" },
  { icon: "checker", text: "ESRI World Imagery", depth: 1 },
  { icon: "checker", text: "NASA Blue Marble", depth: 1 },
  { icon: "checker", text: "OpenStreetMap", depth: 1 },
  { icon: "checker", text: "Stamen Toner Lite", depth: 1 },
  { icon: "darkGlobe", text: "WCS" },
  { icon: "wfs", text: "WFS" },
  { icon: "wireGlobe", text: "OWS" },
  { icon: "arcgis", text: "ArcGisMapServer" },
  { icon: "wireGlobe", text: "" },
];

/* ---------- parts ---------- */

const ToolGroups = ({ groups }: { groups: Item[][] }) => (
  <>
    {groups.map((group, g) => (
      <React.Fragment key={g}>
        <Handle><Dot /><Dot /><Dot /><Dot /></Handle>
        {group.map((t) => (
          <Tool key={t.n} $active={t.active} $menu={t.menu}>
            <Icon name={t.n} dim={t.dim} />
            {t.menu && <Caret />}
            {t.small && <Caret $small />}
          </Tool>
        ))}
      </React.Fragment>
    ))}
  </>
);

const DockHeader = ({ title }: { title: string }) => (
  <DockTitle>
    <svg width="14" height="14" viewBox="0 0 14 14" aria-hidden>
      <circle cx="7" cy="7" r="7" fill="#434343" />
      <path d="M4.200 4.200l5.600 5.600M9.800 4.200L4.200 9.800" stroke="#fff" strokeWidth="2" />
    </svg>
    <svg width="14" height="14" viewBox="0 0 14 14" aria-hidden>
      <circle cx="7" cy="7" r="7" fill="#434343" />
      <path d="M5.500 5.500v-2h5v4h-2M3.500 5.500h5v4.500h-5z" fill="none" stroke="#fff" strokeWidth="1.100" />
    </svg>
    <DockName>{title}</DockName>
  </DockTitle>
);

const Steps = () => (
  <Spinner>
    <svg width="7" height="14" viewBox="0 0 7 14" fill="none" stroke="#444" strokeWidth="1.300" aria-hidden>
      <path d="M1 4.200L3.500 2 6 4.200M1 9.800L3.500 12 6 9.800" />
    </svg>
  </Spinner>
);

export default function App() {
  return (
    <Desktop>
      <GlobalStyle />
      <Window>
        <TitleBar>
          <Lights>
            <Light $color="#fc5650" $edge="#e2463f" />
            <Light $color="#fdb429" $edge="#e09e22" />
            <Light $color="#28c131" $edge="#1fa92a" />
          </Lights>
          <span>QGIS</span>
        </TitleBar>
        <ToolBar>
          <ToolGroups groups={topGroups} />
          <Chevrons><More /></Chevrons>
        </ToolBar>
        <ToolBar>
          <ToolGroups groups={editGroups} />
        </ToolBar>
        <Body>
          <SideBar>
            <SideGrip><Dot /><Dot /><Dot /><Dot /><Dot /><Dot /></SideGrip>
            {sideTools.map((t) => (
              <SideTool key={t.n} $menu={t.menu}>
                <Icon name={t.n} />
                {t.menu && <Caret />}
              </SideTool>
            ))}
          </SideBar>
          <Dock>
            <DockHeader title="Layers" />
            <DockTools>
              {["brush", "addGroup", "eye", "funnel"].map((n) => (
                <SmallTool key={n}><Icon name={n} size={16} /></SmallTool>
              ))}
              <Chevrons $dock><More /></Chevrons>
            </DockTools>
            <LayerTree />
            <TabBar>
              <Tab $on>Layers</Tab>
              <Tab>Browser</Tab>
            </TabBar>
            <DockHeader title="Browser (2)" />
            <DockTools>
              {["addLayer", "refresh", "funnel", "collapse", "info"].map((n) => (
                <SmallTool key={n}><Icon name={n} size={16} /></SmallTool>
              ))}
            </DockTools>
            <Tree>
              {treeRows.map((r, i) => (
                <Row key={i} $depth={r.depth ?? 0}>
                  <Twist>
                    {r.twist && (
                      <svg width="9" height="9" viewBox="0 0 9 9" fill="#7c7c7c" aria-hidden>
                        <path d={r.twist === "open" ? "M0 1h9L4.500 8.500z" : "M1 0v9l7.500-4.500z"} />
                      </svg>
                    )}
                  </Twist>
                  <Icon name={r.icon} size={16} />
                  <RowText>{r.text}</RowText>
                </Row>
              ))}
            </Tree>
          </Dock>
          <Main>
            <Heading>Recent Projects</Heading>
            <ProjectList />
            <Notice>
              <b>There is a new QGIS version available</b>: Visit http://download.qgis.org to get your copy of version 3.2.3
            </Notice>
          </Main>
        </Body>
        <StatusBar>
          <Locator>
            <Icon name="search" size={13} />
            <span>Type to locate (⌘K)</span>
          </Locator>
          <Label $gap={8} $w={26}>Ready</Label>
          <Label $gap={9} $w={70}>Coordinate</Label>
          <Field $w={125} />
          <PushButton $w={26} $h={26}><Icon name="mouse" size={16} /></PushButton>
          <Label $gap={9} $w={37}>Scale</Label>
          <Field $w={103} $wide>1:22,390,718</Field>
          <ComboArrow>
            <svg width="8" height="5" viewBox="0 0 8 5" fill="none" stroke="#fff" strokeWidth="1.500" aria-hidden><path d="M1 1l3 3 3-3" /></svg>
          </ComboArrow>
          <PushButton $w={26} $h={26}><Icon name="lock" size={15} /></PushButton>
          <Label $gap={9} $w={61}>Magnifier</Label>
          <Field $w={79}>100%</Field>
          <Steps />
          <Label $gap={10} $w={61}>Rotation</Label>
          <Field $w={75}>0.0 °</Field>
          <Steps />
          <CheckBox>
            <svg width="10" height="10" viewBox="0 0 10 10" fill="none" stroke="#fff" strokeWidth="1.500" aria-hidden><path d="M1.500 5.500l2.500 3L8.500 1.500" /></svg>
          </CheckBox>
          <Label $gap={4} $w={46}>Render</Label>
          <PushButton $w={108} $h={30} $text><Icon name="crs" size={16} />EPSG:4326</PushButton>
          <PushButton $w={26} $h={30} $gap={6}><Icon name="message" size={17} /></PushButton>
        </StatusBar>
      </Window>
    </Desktop>
  );
}
